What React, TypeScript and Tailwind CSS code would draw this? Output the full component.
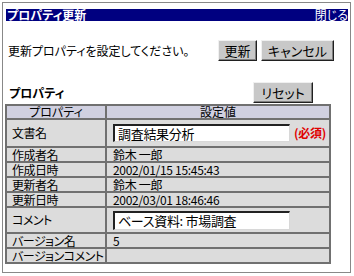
import React from "react";

function Btn({ w, children }: { w: string; children: React.ReactNode }) {
  return (
    <div
      className={`${w} h-[21px] flex items-center justify-center bg-[#c8c8c8] border-t border-l border-t-[#f0f0f0] border-l-[#f0f0f0] border-b border-r border-b-[#202020] border-r-[#202020] shadow-[inset_-1px_-1px_0_#808080] text-[13px] leading-none text-black`}
    >
      {children}
    </div>
  );
}

function Field({ value, h }: { value: string; h: string }) {
  return (
    <div
      className={`w-[177px] ${h} bg-white border-t-2 border-l-2 border-t-[#222] border-l-[#222] border-b border-r border-b-[#d8d8d8] border-r-[#d8d8d8] flex items-center pl-[3px] text-[13px] leading-none text-black`}
    >
      {value}
    </div>
  );
}

export default function App() {
  const rows: { label: string; value: React.ReactNode }[] = [
    {
      label: "文書名",
      value: (
        <div className="flex items-center gap-[4px]">
          <Field value="調査結果分析" h="h-[18px]" />
          <span className="text-[#e00000] font-bold text-[12px]">(必須)</span>
        </div>
      ),
    },
    { label: "作成者名", value: "鈴木 一郎" },
    { label: "作成日時", value: "2002/01/15 15:45:43" },
    { label: "更新者名", value: "鈴木 一郎" },
    { label: "更新日時", value: "2002/03/01 18:46:46" },
    { label: "コメント", value: <Field value="ベース資料: 市場調査" h="h-[19px]" /> },
    { label: "バージョン名", value: "5" },
    { label: "バージョンコメント", value: "" },
  ];

  return (
    <div className="w-[354px] h-[276px] bg-white overflow-hidden font-['Noto_Sans_CJK_JP',sans-serif] [font-feature-settings:'palt'] text-black">
      <div className="ml-[2px] mt-[2px] w-[349px] h-[271px] border border-[#888] pt-[6px]">
        <div className="ml-[3px] mr-[2px] h-[12px] bg-[#000080] flex items-center justify-between text-white text-[12px] leading-[12px]">
          <span className="font-bold pl-[1px]">プロパティ更新</span>
          <span className="underline">閉じる</span>
        </div>

        <div className="mt-[19px] h-[21px] flex items-center">
          <span className="pl-[5px] text-[12px] leading-[13px]">更新プロパティを設定してください。</span>
          <div className="ml-auto mr-[16px] flex gap-[4px]">
            <Btn w="w-[39px]">更新</Btn>
            <Btn w="w-[73px]">キャンセル</Btn>
          </div>
        </div>

        <div className="mt-[21px] h-[20px] flex items-center">
          <span className="pl-[6px] text-[12px] font-bold leading-[13px]">プロパティ</span>
          <div className="ml-auto mr-[37px]">
            <Btn w="w-[60px]">リセット</Btn>
          </div>
        </div>

        <div className="ml-[2px] mt-[2px] w-[326px] grid grid-cols-[98px_222px] grid-rows-[12px_26px_13px_13px_13px_13px_24px_13px_13px] gap-[2px] p-[2px] bg-[#707070] text-[12px] leading-[12px]">
          <div className="bg-[#d0d0e0] flex items-center justify-center">プロパティ</div>
          <div className="bg-[#d0d0e0] flex items-center justify-center">設定値</div>
          {rows.map((r) => (
            <React.Fragment key={r.label}>
              <div className="bg-[#dcdcdc] flex items-center pl-[5px] whitespace-nowrap tracking-[-0.5px]">{r.label}</div>
              <div className="bg-[#dcdcdc] flex items-center pl-[6px] whitespace-nowrap tracking-[-0.3px]">{r.value}</div>
            </React.Fragment>
          ))}
        </div>
      </div>
    </div>
  );
}
